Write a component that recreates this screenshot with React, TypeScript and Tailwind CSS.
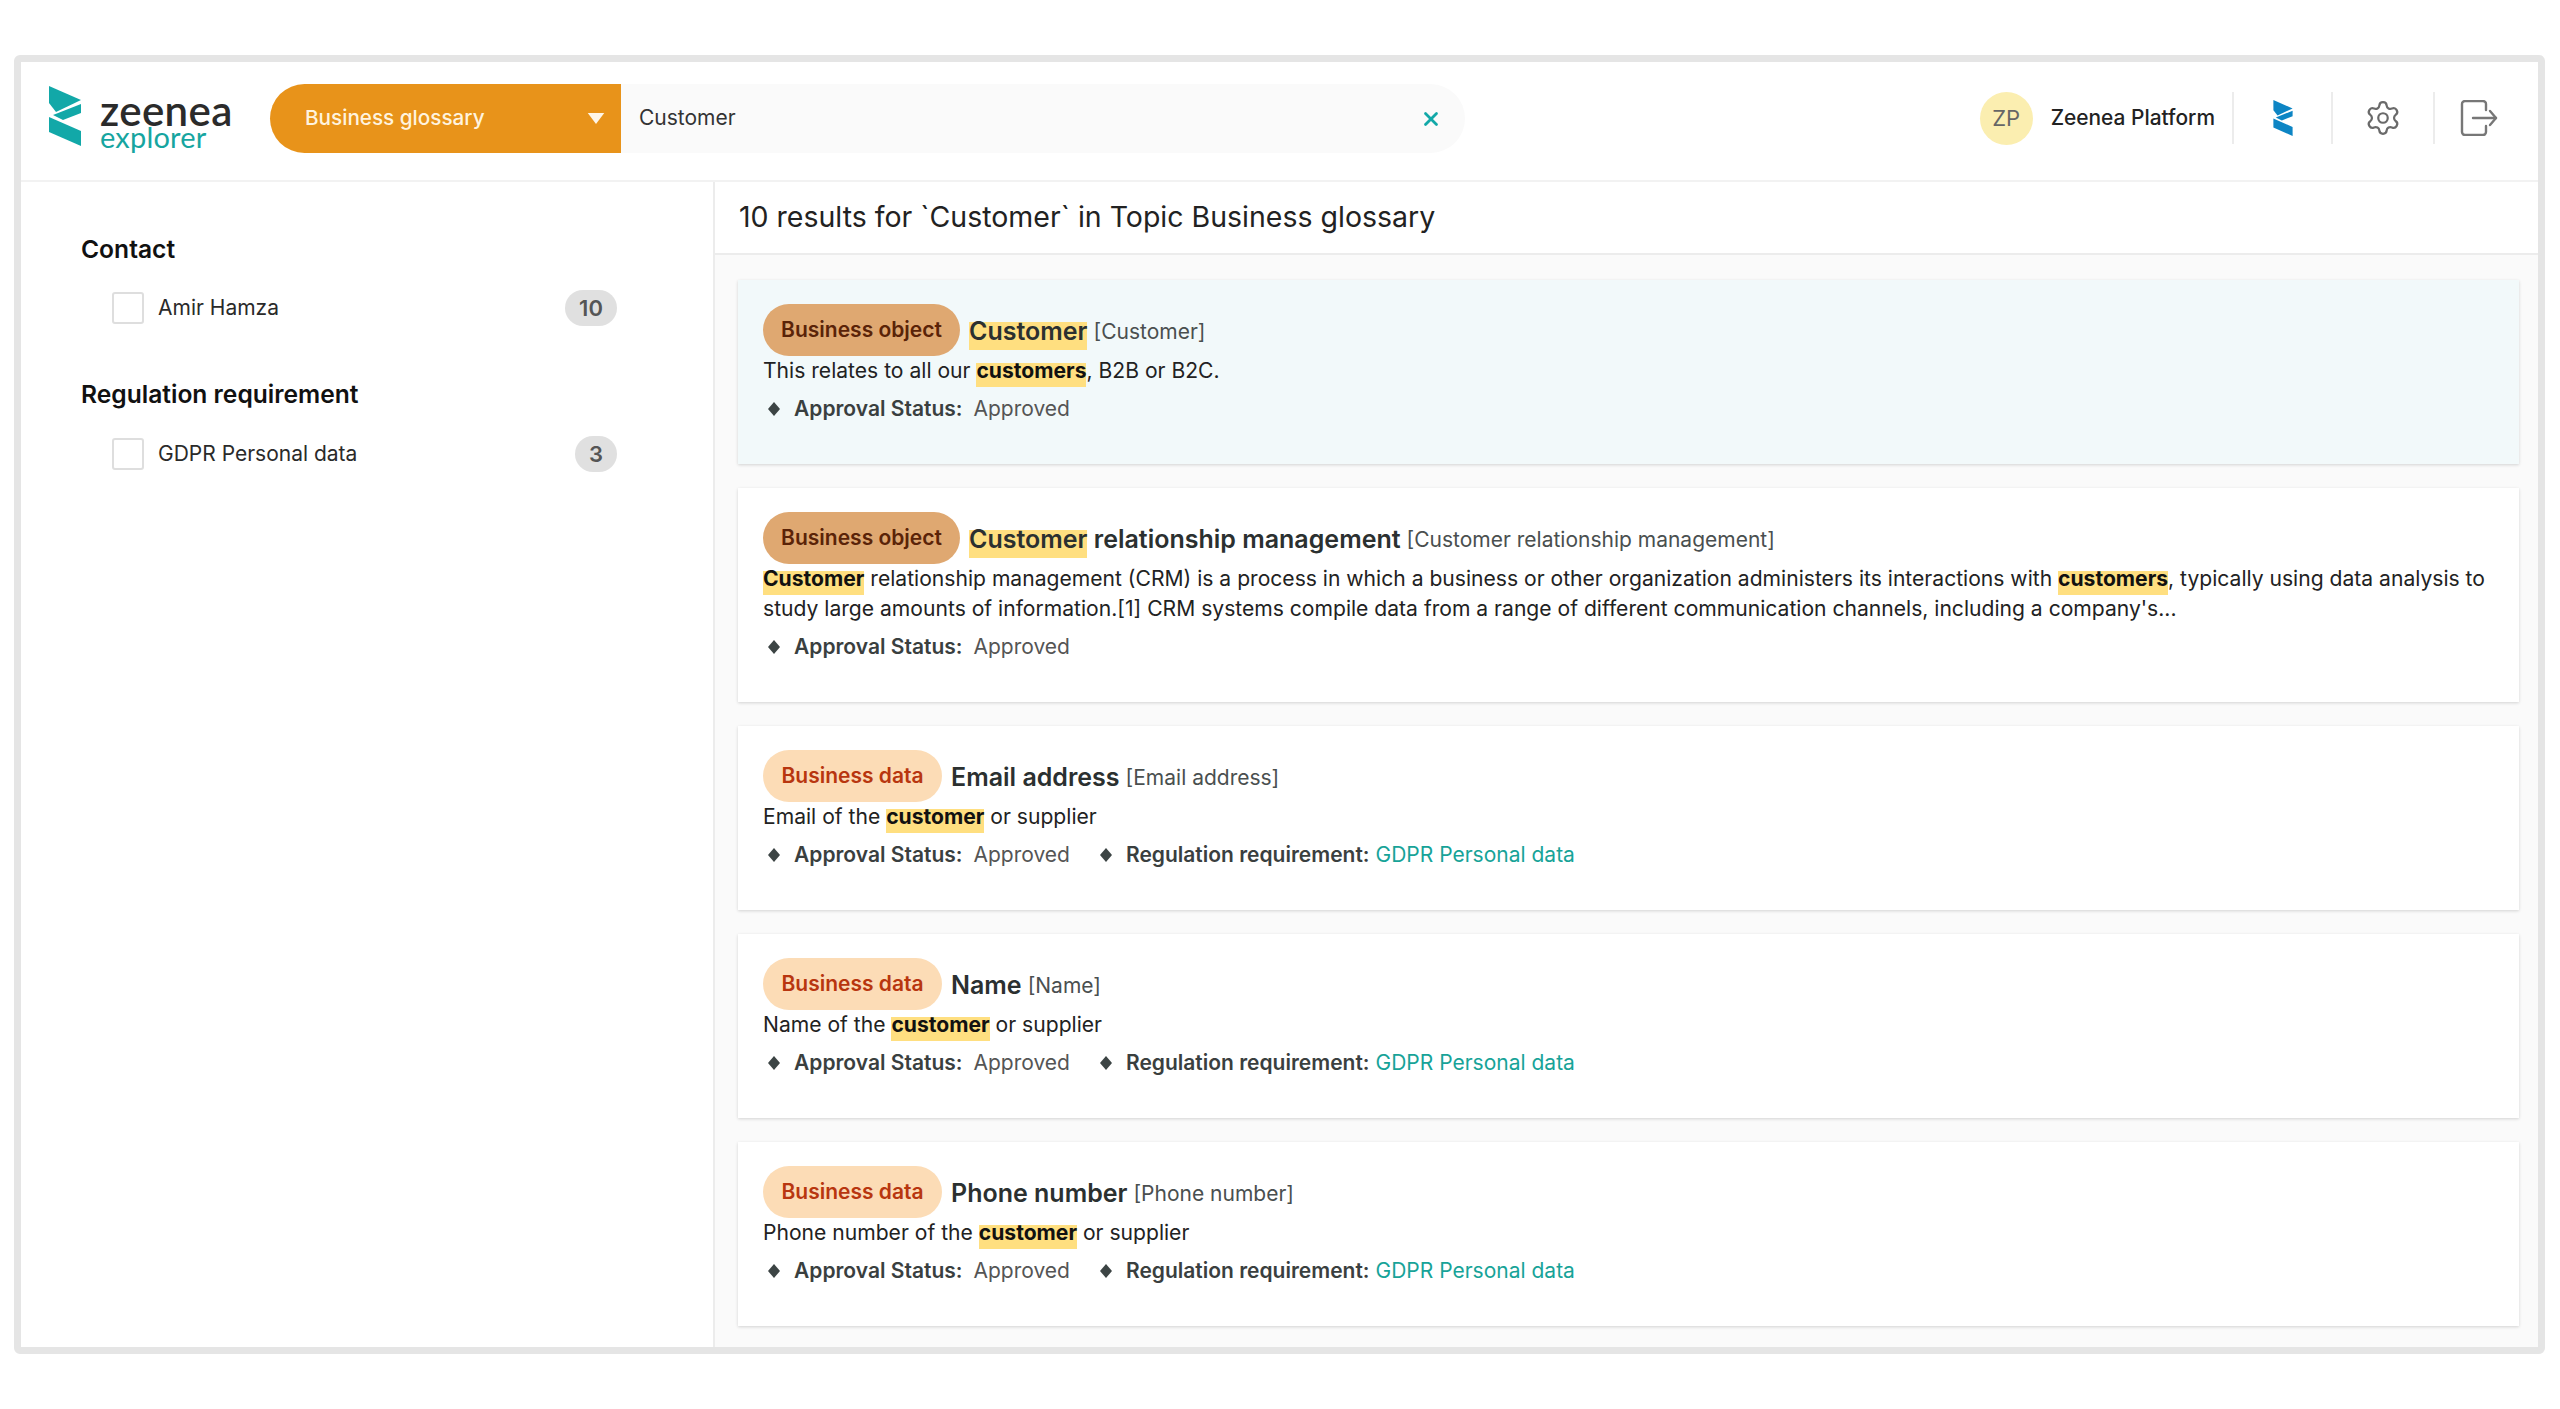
import React from "react";
import { Settings, X } from "lucide-react";

const font = "font-['Inter','Noto_Sans',sans-serif]";

function Mark({ className, color }: { className: string; color: string }) {
  return (
    <svg viewBox="0 0 32 60" className={className} fill={color}>
      <polygon points="0,0 32,14 7,26 0,17" />
      <polygon points="32,18 32,27 14,34 4,29" />
      <polygon points="0,31 32,45 32,60 0,46" />
    </svg>
  );
}

function Diamond() {
  return (
    <svg viewBox="0 0 12 14" className="w-[12px] h-[14px] shrink-0 mr-[14px]" fill="#3c4444">
      <polygon points="6,0 12,7 6,14 0,7" />
    </svg>
  );
}

function H({ children }: { children: React.ReactNode }) {
  return (
    <span className="font-bold text-[#111] bg-[linear-gradient(transparent_16%,#ffdf80_16%)] pb-[4px]">
      {children}
    </span>
  );
}

function TitleMark({ children }: { children: React.ReactNode }) {
  return (
    <span className="bg-[linear-gradient(transparent_18%,#ffdf80_18%)] pb-[4px]">{children}</span>
  );
}

function Pill({ kind }: { kind: "object" | "data" }) {
  return kind === "object" ? (
    <span className="h-[52px] w-[197px] rounded-[26px] bg-[#dfa871] text-[#5a2308] text-[21px] font-semibold flex items-center justify-center shrink-0">
      Business object
    </span>
  ) : (
    <span className="h-[52px] w-[179px] rounded-[26px] bg-[#fcdcb6] text-[#b8360f] text-[21px] font-semibold flex items-center justify-center shrink-0">
      Business data
    </span>
  );
}

function Meta({ gdpr }: { gdpr?: boolean }) {
  return (
    <div className="mt-[8px] h-[30px] flex items-center text-[21px] text-[#555] pl-[5px]">
      <Diamond />
      <span className="font-semibold text-[#3a3f3f]">Approval Status:</span>
      <span className="ml-[11px]">Approved</span>
      {gdpr && (
        <>
          <span className="w-[30px]" />
          <Diamond />
          <span className="font-semibold text-[#3a3f3f]">Regulation requirement:</span>
          <span className="ml-[6px] text-[#17a398]">GDPR Personal data</span>
        </>
      )}
    </div>
  );
}

function Card({
  kind,
  title,
  tag,
  children,
  gdpr,
  selected,
}: {
  kind: "object" | "data";
  title: React.ReactNode;
  tag: string;
  children: React.ReactNode;
  gdpr?: boolean;
  selected?: boolean;
}) {
  return (
    <div
      className={`pl-[25px] pr-[20px] pt-[24px] pb-[40px] shadow-[0_1px_3px_rgba(0,0,0,0.16)] ${
        selected ? "bg-[#f2f9fa]" : "bg-white"
      }`}
    >
      <div className="flex items-center h-[52px]">
        <Pill kind={kind} />
        <span className="ml-[9px] mt-[3px] text-[25px] font-semibold text-[#2b3030] whitespace-nowrap">{title}</span>
        <span className="ml-[6px] mt-[4px] text-[21px] text-[#4a4f4f] whitespace-nowrap">{tag}</span>
      </div>
      <div className="text-[21.1px] leading-[30px] text-[#222]">{children}</div>
      <Meta gdpr={gdpr} />
    </div>
  );
}

function Facet({ label, count, wide }: { label: string; count: string; wide?: boolean }) {
  return (
    <div className="flex items-center h-[36px] pl-[31px]">
      <span className="w-[32px] h-[32px] rounded-[3px] border-2 border-[#dedede] bg-white shrink-0" />
      <span className="ml-[14px] text-[21px] text-[#2a2a2a] flex-1">{label}</span>
      <span
        className={`h-[36px] ${wide ? "w-[52px]" : "w-[42px]"} rounded-[18px] bg-[#e0e0e0] text-[#555] text-[22px] font-semibold flex items-center justify-center mr-[1px]`}
      >
        {count}
      </span>
    </div>
  );
}

function Divider() {
  return <span className="block w-[2px] h-[52px] bg-[#ececec] shrink-0" />;
}

export default function App() {
  return (
    <div className={`${font} w-[2560px] h-[1409px] bg-white pt-[55px] pl-[14px]`}>
      <div className="w-[2531px] h-[1299px] border-[7px] border-[#e5e5e5] rounded-[6px] flex flex-col overflow-hidden bg-white">
        {/* header */}
        <div className="h-[120px] shrink-0 border-b-2 border-[#f2f2f2] flex items-center pl-[28px] pr-[40px] pb-[6px]">
          <Mark className="w-[32px] h-[60px] shrink-0 mb-[4px]" color="#12a8a8" />
          <div className="ml-[19px] w-[132px] mt-[5px] flex flex-col leading-none">
            <span className="text-[42px] leading-[32px] font-semibold text-[#2b2b2b] tracking-[0.4px] font-['Lato',sans-serif]">zeenea</span>
            <span className="text-[29px] leading-[22px] text-[#16a5a0] tracking-[0.2px] font-['Lato',sans-serif]">explorer</span>
          </div>
          <div className="ml-[38px] w-[351px] h-[69px] rounded-l-[35px] bg-[#e8931a] flex items-center pl-[35px] pr-[16px] text-[20.7px] text-[#fff3df] font-medium shrink-0">
            <span className="flex-1">Business glossary</span>
            <svg viewBox="0 0 18 12" className="w-[18px] h-[11px]" fill="#fff6e8">
              <polygon points="0,0 18,0 9,12" />
            </svg>
          </div>
          <div className="w-[844px] h-[69px] rounded-r-[35px] bg-[#fafafa] flex items-center pl-[18px] pr-[23px] text-[21px] text-[#333] shrink-0">
            <span className="flex-1">Customer</span>
            <X className="w-[22px] h-[22px] text-[#12a8a8] mt-[2px]" strokeWidth={3} />
          </div>
          <div className="flex-1" />
          <div className="flex items-center">
            <span className="w-[53px] h-[53px] rounded-full bg-[#fbeeb0] text-[#666] text-[22px] flex items-center justify-center">ZP</span>
            <span className="ml-[18px] text-[20.9px] font-medium text-[#222] whitespace-nowrap">Zeenea Platform</span>
            <span className="ml-[17px]"><Divider /></span>
            <Mark className="ml-[39px] w-[20px] h-[36px] shrink-0" color="#0d85c4" />
            <span className="ml-[38px]"><Divider /></span>
            <Settings className="ml-[31px] w-[38px] h-[38px] text-[#6a6a6a] shrink-0" strokeWidth={1.4} />
            <span className="ml-[31px]"><Divider /></span>
            <svg viewBox="0 0 38 36" className="ml-[25px] w-[38px] h-[36px] shrink-0" fill="none" stroke="#777" strokeWidth="2.4" strokeLinecap="round" strokeLinejoin="round">
              <path d="M26 10V4a3 3 0 0 0-3-3H5a3 3 0 0 0-3 3v28a3 3 0 0 0 3 3h18a3 3 0 0 0 3-3v-6" />
              <path d="M13 18h23" />
              <path d="M30 11l6 7-6 7" />
            </svg>
          </div>
        </div>
        <div className="flex flex-1 min-h-0">
          {/* sidebar */}
          <aside className="w-[694px] shrink-0 border-r-2 border-[#ececec] pl-[60px] pr-[95px] pt-[49px] bg-white">
            <div className="text-[24.6px] leading-[36px] font-semibold text-[#111]">Contact</div>
            <div className="mt-[23px]"><Facet label="Amir Hamza" count="10" wide /></div>
            <div className="mt-[50px] text-[24.6px] leading-[36px] font-semibold text-[#111]">Regulation requirement</div>
            <div className="mt-[24px]"><Facet label="GDPR Personal data" count="3" /></div>
          </aside>
          {/* results */}
          <main className="flex-1 min-w-0 bg-[#fafafa] flex flex-col">
            <div className="h-[73px] shrink-0 bg-white border-b-2 border-[#ececec] pl-[24px] flex items-center text-[28.5px] text-[#222]">
              10 results for `Customer` in Topic Business glossary
            </div>
            <div className="pl-[23px] pr-[19px] pt-[25px] flex flex-col gap-[24px]">
              <Card kind="object" title={<TitleMark>Customer</TitleMark>} tag="[Customer]" selected>
                This relates to all our <H>customers</H>, B2B or B2C.
              </Card>
              <Card
                kind="object"
                title={<><TitleMark>Customer</TitleMark> relationship management</>}
                tag="[Customer relationship management]"
              >
                <H>Customer</H> relationship management (CRM) is a process in which a business or other organization administers its interactions with <H>customers</H>, typically using data analysis to study large amounts of information.[1] CRM systems compile data from a range of different communication channels, including a company's...
              </Card>
              <Card kind="data" title="Email address" tag="[Email address]" gdpr>
                Email of the <H>customer</H> or supplier
              </Card>
              <Card kind="data" title="Name" tag="[Name]" gdpr>
                Name of the <H>customer</H> or supplier
              </Card>
              <Card kind="data" title="Phone number" tag="[Phone number]" gdpr>
                Phone number of the <H>customer</H> or supplier
              </Card>
            </div>
          </main>
        </div>
      </div>
    </div>
  );
}
